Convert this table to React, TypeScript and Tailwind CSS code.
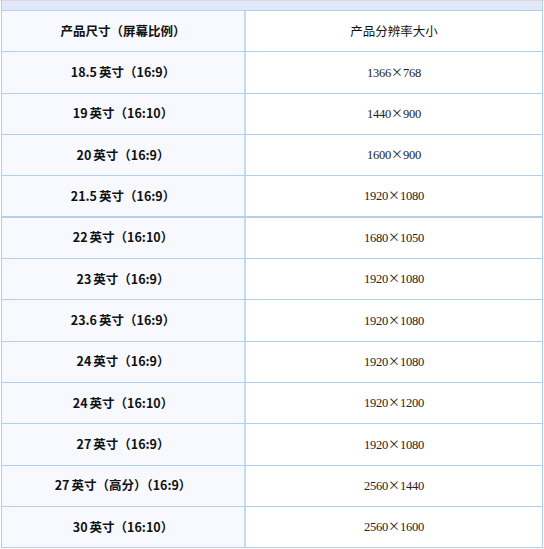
import React from "react";

const rows: [string, string][] = [
  ["18.5英寸（16:9）", "1366×768"],
  ["19英寸（16:10）", "1440×900"],
  ["20英寸（16:9）", "1600×900"],
  ["21.5英寸（16:9）", "1920×1080"],
  ["22英寸（16:10）", "1680×1050"],
  ["23英寸（16:9）", "1920×1080"],
  ["23.6英寸（16:9）", "1920×1080"],
  ["24英寸（16:9）", "1920×1080"],
  ["24英寸（16:10）", "1920×1200"],
  ["27英寸（16:9）", "1920×1080"],
  ["27英寸（高分）（16:9）", "2560×1440"],
  ["30英寸（16:10）", "2560×1600"],
];

function Res({ v }: { v: string }) {
  const [a, b] = v.split("×");
  return (
    <span className="font-['Liberation_Serif','Noto_Sans_CJK_SC',serif] text-[12.5px] text-[#222] tracking-[-0.2px]">
      {a}
      <span className="font-['Noto_Sans_CJK_SC',sans-serif] text-[12px]">×</span>
      {b}
    </span>
  );
}

function Left({ t }: { t: string }) {
  const m = t.match(/^([\d.]+)(.*)$/);
  return (
    <span className="font-['Noto_Sans_CJK_SC',sans-serif] font-bold text-[12.5px] text-[#111]">
      {m ? (
        <>
          <span className="mr-[2px]">{m[1]}</span>
          {m[2]}
        </>
      ) : (
        t
      )}
    </span>
  );
}

export default function App() {
  return (
    <div className="w-[544px] h-[549px] bg-white overflow-hidden">
      <div className="w-[544px] border-t border-[#d9d9d9]">
        <div className="ml-px w-[542px] h-[9px] bg-[#e0e8fb] border-l border-r border-[#b4cfe8]" />
        <div className="ml-px w-[542px] border-l border-r border-[#b4cfe8] border-t border-t-[#b4cfe8]">
          <div className="flex h-[41.33px] border-b border-[#b4cfe8]">
            <div className="w-[244px] bg-[#f7f9ff] border-r-2 border-[#c4dbef] flex items-center justify-center">
              <span className="font-['Noto_Sans_CJK_SC',sans-serif] font-bold text-[12.5px] text-[#111]">
                产品尺寸（屏幕比例）
              </span>
            </div>
            <div className="flex-1 bg-white flex items-center justify-center">
              <span className="font-['Noto_Sans_CJK_SC',sans-serif] text-[12.5px] text-[#111]">
                产品分辨率大小
              </span>
            </div>
          </div>
          {rows.map(([l, r], i) => (
            <div
              key={i}
              className={
                "flex h-[41.33px] border-[#b4cfe8] " + (i === 3 ? "border-b-2" : "border-b")
              }
            >
              <div className="w-[244px] bg-[#f7f9ff] border-r-2 border-[#c4dbef] flex items-center justify-center">
                <Left t={l} />
              </div>
              <div className="flex-1 bg-white flex items-center justify-center">
                <Res v={r} />
              </div>
            </div>
          ))}
        </div>
      </div>
    </div>
  );
}
